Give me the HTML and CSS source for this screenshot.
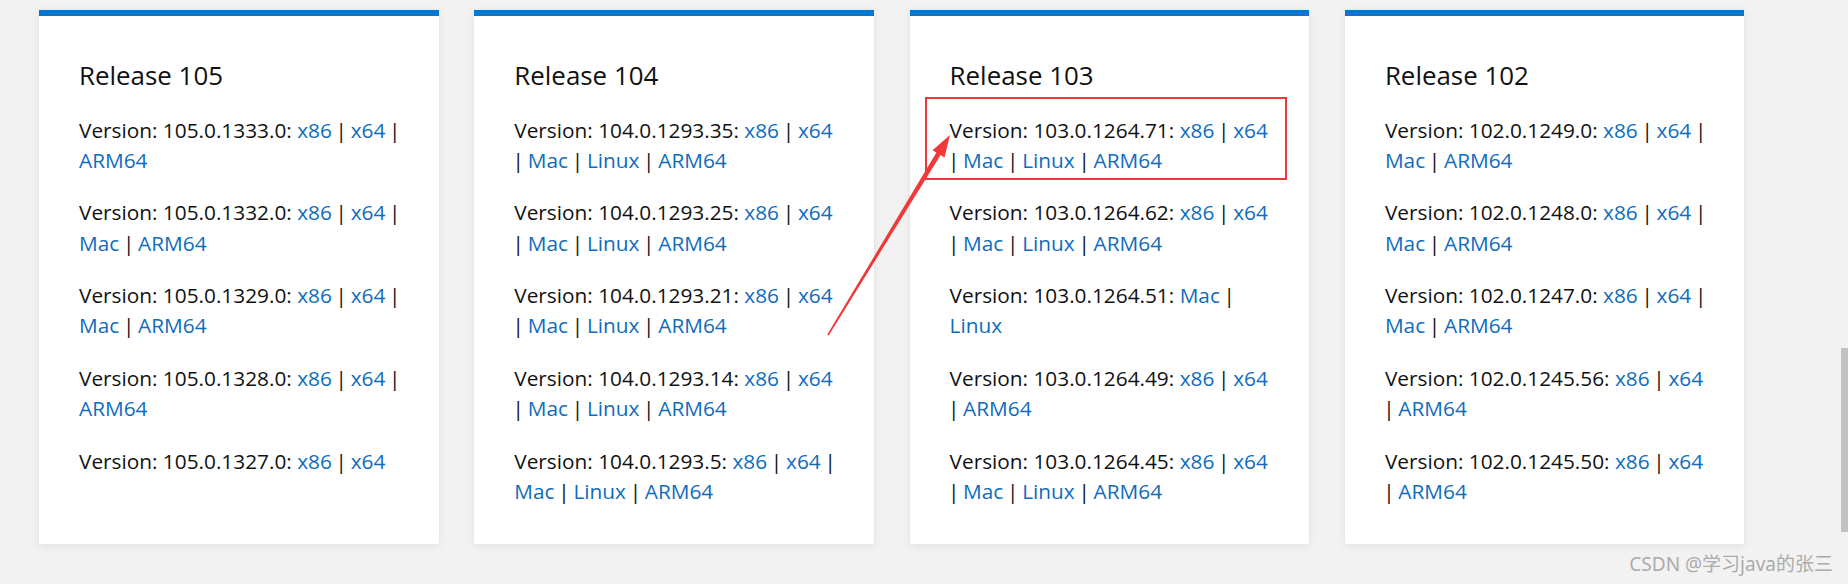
FILE: index.html
```html
<!DOCTYPE html>
<html lang="en">
<head>
<meta charset="utf-8">
<title>Edge Releases</title>
<link rel="stylesheet" href="styles.css">
</head>
<body>
<div class="page">
  <main class="grid">
    <section class="card">
      <h2 class="title">Release 105</h2>
      <p class="ver">Version: 105.0.1333.0: <a href="#">x86</a> <span class="sep">|</span> <a href="#">x64</a> <span class="sep">|</span> <a href="#">ARM64</a></p>
      <p class="ver">Version: 105.0.1332.0: <a href="#">x86</a> <span class="sep">|</span> <a href="#">x64</a> <span class="sep">|</span> <a href="#">Mac</a> <span class="sep">|</span> <a href="#">ARM64</a></p>
      <p class="ver">Version: 105.0.1329.0: <a href="#">x86</a> <span class="sep">|</span> <a href="#">x64</a> <span class="sep">|</span> <a href="#">Mac</a> <span class="sep">|</span> <a href="#">ARM64</a></p>
      <p class="ver">Version: 105.0.1328.0: <a href="#">x86</a> <span class="sep">|</span> <a href="#">x64</a> <span class="sep">|</span> <a href="#">ARM64</a></p>
      <p class="ver">Version: 105.0.1327.0: <a href="#">x86</a> <span class="sep">|</span> <a href="#">x64</a></p>
    </section>
    <section class="card">
      <h2 class="title">Release 104</h2>
      <p class="ver">Version: 104.0.1293.35: <a href="#">x86</a> <span class="sep">|</span> <a href="#">x64</a> <span class="sep">|</span> <a href="#">Mac</a> <span class="sep">|</span> <a href="#">Linux</a> <span class="sep">|</span> <a href="#">ARM64</a></p>
      <p class="ver">Version: 104.0.1293.25: <a href="#">x86</a> <span class="sep">|</span> <a href="#">x64</a> <span class="sep">|</span> <a href="#">Mac</a> <span class="sep">|</span> <a href="#">Linux</a> <span class="sep">|</span> <a href="#">ARM64</a></p>
      <p class="ver">Version: 104.0.1293.21: <a href="#">x86</a> <span class="sep">|</span> <a href="#">x64</a> <span class="sep">|</span> <a href="#">Mac</a> <span class="sep">|</span> <a href="#">Linux</a> <span class="sep">|</span> <a href="#">ARM64</a></p>
      <p class="ver">Version: 104.0.1293.14: <a href="#">x86</a> <span class="sep">|</span> <a href="#">x64</a> <span class="sep">|</span> <a href="#">Mac</a> <span class="sep">|</span> <a href="#">Linux</a> <span class="sep">|</span> <a href="#">ARM64</a></p>
      <p class="ver">Version: 104.0.1293.5: <a href="#">x86</a> <span class="sep">|</span> <a href="#">x64</a> <span class="sep">|</span> <a href="#">Mac</a> <span class="sep">|</span> <a href="#">Linux</a> <span class="sep">|</span> <a href="#">ARM64</a></p>
    </section>
    <section class="card">
      <h2 class="title">Release 103</h2>
      <p class="ver">Version: 103.0.1264.71: <a href="#">x86</a> <span class="sep">|</span> <a href="#">x64</a> <span class="sep">|</span> <a href="#">Mac</a> <span class="sep">|</span> <a href="#">Linux</a> <span class="sep">|</span> <a href="#">ARM64</a></p>
      <p class="ver">Version: 103.0.1264.62: <a href="#">x86</a> <span class="sep">|</span> <a href="#">x64</a> <span class="sep">|</span> <a href="#">Mac</a> <span class="sep">|</span> <a href="#">Linux</a> <span class="sep">|</span> <a href="#">ARM64</a></p>
      <p class="ver">Version: 103.0.1264.51: <a href="#">Mac</a> <span class="sep">|</span> <a href="#">Linux</a></p>
      <p class="ver">Version: 103.0.1264.49: <a href="#">x86</a> <span class="sep">|</span> <a href="#">x64</a> <span class="sep">|</span> <a href="#">ARM64</a></p>
      <p class="ver">Version: 103.0.1264.45: <a href="#">x86</a> <span class="sep">|</span> <a href="#">x64</a> <span class="sep">|</span> <a href="#">Mac</a> <span class="sep">|</span> <a href="#">Linux</a> <span class="sep">|</span> <a href="#">ARM64</a></p>
    </section>
    <section class="card">
      <h2 class="title">Release 102</h2>
      <p class="ver">Version: 102.0.1249.0: <a href="#">x86</a> <span class="sep">|</span> <a href="#">x64</a> <span class="sep">|</span> <a href="#">Mac</a> <span class="sep">|</span> <a href="#">ARM64</a></p>
      <p class="ver">Version: 102.0.1248.0: <a href="#">x86</a> <span class="sep">|</span> <a href="#">x64</a> <span class="sep">|</span> <a href="#">Mac</a> <span class="sep">|</span> <a href="#">ARM64</a></p>
      <p class="ver">Version: 102.0.1247.0: <a href="#">x86</a> <span class="sep">|</span> <a href="#">x64</a> <span class="sep">|</span> <a href="#">Mac</a> <span class="sep">|</span> <a href="#">ARM64</a></p>
      <p class="ver">Version: 102.0.1245.56: <a href="#">x86</a> <span class="sep">|</span> <a href="#">x64</a> <span class="sep">|</span> <a href="#">ARM64</a></p>
      <p class="ver">Version: 102.0.1245.50: <a href="#">x86</a> <span class="sep">|</span> <a href="#">x64</a> <span class="sep">|</span> <a href="#">ARM64</a></p>
    </section>
  </main>

  <div class="highlight"></div>
  <svg class="arrow" width="1848" height="584" viewBox="0 0 1848 584" aria-hidden="true">
    <polygon points="827.3,334.6 936.4,152.5 932.5,150.2 950,135 944.5,157.4 940.6,155.1 828.7,335.4" fill="#f03a3a"/>
  </svg>
  <div class="scroll-thumb"></div>
  <div class="watermark">CSDN @学习java的张三</div>
</div>
</body>
</html>
```

FILE: styles.css
```css
html, body {
  margin: 0;
  padding: 0;
}

body {
  background: #f2f2f2;
  font-family: "Open Sans", "Noto Sans", sans-serif;
  color: #111111;
  overflow: hidden;
}

.page {
  position: relative;
  width: 1848px;
  height: 584px;
}

.grid {
  display: grid;
  grid-template-columns: repeat(4, 399.5px);
  column-gap: 35.8px;
  padding: 10px 0 0 39px;
  align-items: stretch;
}

.card {
  box-sizing: border-box;
  min-height: 534px;
  background: #ffffff;
  border-top: 6px solid #0078d4;
  padding: 42.75px 34px 0 40px;
  box-shadow: 0 2px 10px rgba(0, 0, 0, 0.07), 0 0 2px rgba(0, 0, 0, 0.04);
}

.title {
  margin: 0 0 23.35px 0;
  font-size: 25.9px;
  line-height: 32.4px;
  font-weight: 400;
  color: #111111;
}

.ver {
  margin: 0 0 22.3px 0;
  font-size: 20.8px;
  line-height: 30.25px;
  color: #111111;
}

.ver a {
  color: #0f6cbd;
  text-decoration: none;
}

.sep {
  margin: 0 -1.7px;
}

.highlight {
  position: absolute;
  left: 925px;
  top: 96.5px;
  width: 362px;
  height: 83.5px;
  box-sizing: border-box;
  border: 2.5px solid #ea3a3e;
}

.arrow {
  position: absolute;
  left: 0;
  top: 0;
  pointer-events: none;
}

.scroll-thumb {
  position: absolute;
  right: 0;
  top: 348px;
  width: 7px;
  height: 184px;
  background: #c1c1c1;
}

.watermark {
  position: absolute;
  right: 15px;
  top: 552px;
  font-family: "Noto Sans", "Noto Sans CJK SC", sans-serif;
  font-size: 19px;
  line-height: 24px;
  color: #ababab;
  white-space: nowrap;
}
```
